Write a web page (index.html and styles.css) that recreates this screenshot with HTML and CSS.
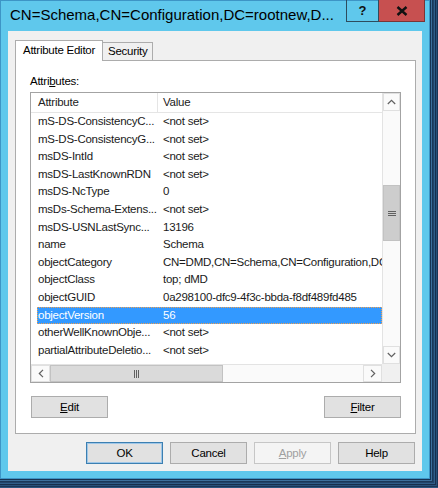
FILE: index.html
```html
<!DOCTYPE html>
<html>
<head>
<meta charset="utf-8">
<link rel="stylesheet" href="styles.css">
</head>
<body>
<div class="window">
  <div class="titlebar">
    <div class="title">CN=Schema,CN=Configuration,DC=rootnew,D...</div>
    <div class="caption">
      <div class="cap-help">?</div>
      <div class="cap-close">
        <svg width="12" height="10" viewBox="0 0 12 10"><path d="M1.5 1 L10.5 9 M10.5 1 L1.5 9" stroke="#111" stroke-width="2.4" fill="none"/></svg>
      </div>
    </div>
  </div>
  <div class="client">
    <div class="tabs">
      <div class="tab active">Attribute Editor</div>
      <div class="tab">Security</div>
    </div>
    <div class="panel">
      <div class="label">Attri<u>b</u>utes:</div>
      <div class="listbox">
        <div class="lb-main">
          <div class="viewport">
            <div class="header">
              <div class="h1">Attribute</div>
              <div class="h2">Value</div>
            </div>
            <div class="row"><div class="c1">mS-DS-ConsistencyC...</div><div class="c2">&lt;not set&gt;</div></div>
            <div class="row"><div class="c1">mS-DS-ConsistencyG...</div><div class="c2">&lt;not set&gt;</div></div>
            <div class="row"><div class="c1">msDS-IntId</div><div class="c2">&lt;not set&gt;</div></div>
            <div class="row"><div class="c1">msDS-LastKnownRDN</div><div class="c2">&lt;not set&gt;</div></div>
            <div class="row"><div class="c1">msDS-NcType</div><div class="c2">0</div></div>
            <div class="row"><div class="c1">msDs-Schema-Extens...</div><div class="c2">&lt;not set&gt;</div></div>
            <div class="row"><div class="c1">msDS-USNLastSync...</div><div class="c2">13196</div></div>
            <div class="row"><div class="c1">name</div><div class="c2">Schema</div></div>
            <div class="row"><div class="c1">objectCategory</div><div class="c2">CN=DMD,CN=Schema,CN=Configuration,DC=rootnew,DC=local</div></div>
            <div class="row"><div class="c1">objectClass</div><div class="c2">top; dMD</div></div>
            <div class="row"><div class="c1">objectGUID</div><div class="c2">0a298100-dfc9-4f3c-bbda-f8df489fd485</div></div>
            <div class="row selected"><div class="c1">objectVersion</div><div class="c2">56</div></div>
            <div class="row"><div class="c1">otherWellKnownObje...</div><div class="c2">&lt;not set&gt;</div></div>
            <div class="row"><div class="c1">partialAttributeDeletio...</div><div class="c2">&lt;not set&gt;</div></div>
          </div>
          <div class="vscroll">
            <div class="sb-btn">
              <svg width="9" height="6" viewBox="0 0 9 6"><path d="M0.8 5 L4.5 1.3 L8.2 5" stroke="#606060" stroke-width="1.2" fill="none"/></svg>
            </div>
            <div class="vtrack">
              <div class="vthumb">
                <svg width="8" height="7" viewBox="0 0 8 7"><path d="M0 1.5 H8 M0 3.5 H8 M0 5.5 H8" stroke="#606060" stroke-width="1"/></svg>
              </div>
            </div>
            <div class="sb-btn">
              <svg width="9" height="6" viewBox="0 0 9 6"><path d="M0.8 1 L4.5 4.7 L8.2 1" stroke="#606060" stroke-width="1.2" fill="none"/></svg>
            </div>
          </div>
        </div>
        <div class="lb-bottom">
          <div class="hscroll">
            <div class="sb-btn h">
              <svg width="6" height="9" viewBox="0 0 6 9"><path d="M5 0.8 L1.3 4.5 L5 8.2" stroke="#606060" stroke-width="1.2" fill="none"/></svg>
            </div>
            <div class="htrack">
              <div class="hthumb">
                <svg width="7" height="8" viewBox="0 0 7 8"><path d="M1.5 0 V8 M3.5 0 V8 M5.5 0 V8" stroke="#606060" stroke-width="1"/></svg>
              </div>
            </div>
            <div class="sb-btn h">
              <svg width="6" height="9" viewBox="0 0 6 9"><path d="M1 0.8 L4.7 4.5 L1 8.2" stroke="#606060" stroke-width="1.2" fill="none"/></svg>
            </div>
          </div>
          <div class="corner"></div>
        </div>
      </div>
      <div class="panel-buttons">
        <div class="btn edit"><u>E</u>dit</div>
        <div class="btn"><u>F</u>ilter</div>
      </div>
    </div>
    <div class="dialog-buttons">
      <div class="btn default">OK</div>
      <div class="btn">Cancel</div>
      <div class="btn disabled"><u>A</u>pply</div>
      <div class="btn">Help</div>
    </div>
  </div>
</div>
</body>
</html>
```

FILE: styles.css
```css
html, body {
  margin: 0;
  padding: 0;
}
body {
  width: 438px;
  height: 488px;
  overflow: hidden;
  background: #ffffff;
  font-family: "Liberation Sans", Arial, sans-serif;
  font-size: 11.5px;
  letter-spacing: -0.25px;
  color: #000;
}
.window {
  width: 430px;
  height: 479px;
  box-sizing: border-box;
  background: #5fc8ec;
  display: flex;
  flex-direction: column;
  box-shadow: inset 0 0 0 1px #3d95c6,
    0 0 0 1px #173452,
    0 0 0 2px #3c6f9c,
    0 0 0 3px #1a3858,
    0 0 0 4px #21446a,
    0 0 0 5px #2f5d88,
    0 0 0 6px #172f4c,
    0 0 0 7px #27507a,
    0 0 0 8px #1a3656,
    0 0 0 9px #2b5680;
}
.titlebar {
  height: 31px;
  flex-shrink: 0;
  display: flex;
  align-items: flex-start;
}
.title {
  flex: 1;
  padding-left: 10px;
  margin-top: 7px;
  font-size: 15px;
  line-height: 16px;
  letter-spacing: 0;
  white-space: nowrap;
  color: #000;
}
.caption {
  display: flex;
  margin-right: 5px;
}
.cap-help {
  width: 33px;
  height: 22px;
  box-sizing: border-box;
  border: 1px solid #2d4c5e;
  border-top: none;
  display: flex;
  align-items: center;
  justify-content: center;
  font-weight: bold;
  font-size: 13px;
  letter-spacing: 0;
  color: #111;
}
.cap-close {
  width: 46px;
  height: 22px;
  box-sizing: border-box;
  background: #c75050;
  border: 1px solid #7a3535;
  border-top: none;
  border-left: none;
  display: flex;
  align-items: center;
  justify-content: center;
}
.client {
  margin: 0 8px 0 8px;
  width: 414px;
  height: 440px;
  box-sizing: border-box;
  background: #f0f0f0;
  padding: 9px 6px 0 7px;
  display: flex;
  flex-direction: column;
}
.tabs {
  display: flex;
  align-items: flex-end;
  height: 20px;
}
.tab {
  box-sizing: border-box;
  border: 1px solid #acacac;
  border-bottom: none;
  background: #f0f0f0;
  height: 18px;
  line-height: 17px;
  width: 51px;
  margin-left: -1px;
  padding-left: 5px;
  white-space: nowrap;
}
.tab.active {
  position: relative;
  z-index: 1;
  background: #ffffff;
  height: 21px;
  width: 88px;
  margin-left: 0;
  margin-bottom: -1px;
  padding-left: 7px;
  line-height: 18px;
}
.panel {
  width: 401px;
  height: 374px;
  box-sizing: border-box;
  border: 1px solid #acacac;
  background: #ffffff;
  padding: 13px 14px 0 14px;
  display: flex;
  flex-direction: column;
}
.label {
  height: 15px;
  line-height: 15px;
  margin-bottom: 3px;
}
.listbox {
  width: 371px;
  height: 291px;
  box-sizing: border-box;
  border: 1px solid #a3a3a3;
  display: flex;
  flex-direction: column;
}
.lb-main {
  display: flex;
  height: 271px;
}
.viewport {
  width: 351px;
  overflow: hidden;
  background: #fff;
}
.header {
  display: flex;
  height: 20px;
  box-sizing: border-box;
  border-bottom: 1px solid #e5e5e5;
  line-height: 18px;
  color: #222;
}
.h1 {
  width: 127px;
  box-sizing: border-box;
  padding-left: 7px;
  border-right: 1px solid #e5e5e5;
}
.h2 {
  padding-left: 5px;
}
.row {
  display: flex;
  height: 17.6px;
  line-height: 17.6px;
  margin-left: 6px;
  white-space: nowrap;
  color: #1a1a1a;
}
.c1 {
  width: 121px;
  flex-shrink: 0;
  padding-left: 1px;
  box-sizing: border-box;
  overflow: hidden;
}
.c2 {
  padding-left: 5px;
}
.row.selected {
  background: #3399ff;
  color: #fff;
  outline: 1px dotted #f0a050;
  outline-offset: -1px;
}
.vscroll {
  width: 18px;
  display: flex;
  flex-direction: column;
  background: #f0f0f0;
  border-left: 1px solid #e3e3e3;
  box-sizing: border-box;
}
.sb-btn {
  height: 18px;
  box-sizing: border-box;
  border: 1px solid #e0e0e0;
  background: #fafafa;
  display: flex;
  align-items: center;
  justify-content: center;
  flex-shrink: 0;
}
.vtrack {
  flex: 1;
  background: #fafafa;
}
.vthumb {
  margin-top: 74px;
  height: 56px;
  background: #cdcdcd;
  border: 1px solid #c2c2c2;
  box-sizing: border-box;
  display: flex;
  align-items: center;
  justify-content: center;
}
.lb-bottom {
  display: flex;
  height: 18px;
}
.hscroll {
  width: 351px;
  display: flex;
  background: #fafafa;
  border-top: 1px solid #e3e3e3;
  box-sizing: border-box;
}
.sb-btn.h {
  height: auto;
  width: 19px;
}
.htrack {
  flex: 1;
  display: flex;
}
.hthumb {
  width: 173px;
  background: #dadada;
  border: 1px solid #c2c2c2;
  box-sizing: border-box;
  display: flex;
  align-items: center;
  justify-content: center;
}
.corner {
  width: 18px;
  background: #f0f0f0;
}
.panel-buttons {
  display: flex;
  justify-content: space-between;
  margin-top: 13px;
  padding-left: 1px;
}
.btn {
  width: 77px;
  height: 22px;
  box-sizing: border-box;
  border: 1px solid #acacac;
  background: #e1e1e1;
  text-align: center;
  line-height: 20px;
  color: #000;
}
.btn.default {
  border-color: #3c7fb1;
  box-shadow: inset 0 0 0 1px #9fc7e8;
}
.btn.disabled {
  background: #f4f4f4;
  border-color: #c6c6c6;
  color: #a0a0a0;
}
.dialog-buttons {
  display: flex;
  justify-content: flex-end;
  gap: 7px;
  margin-top: 8px;
  padding-right: 1px;
}
```
